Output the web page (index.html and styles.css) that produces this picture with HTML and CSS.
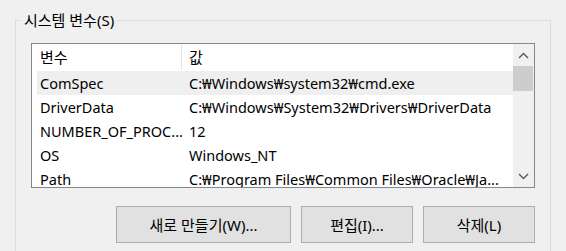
FILE: index.html
```html
<!DOCTYPE html>
<html lang="ko">
<head>
    <meta charset="UTF-8">
    <title>시스템 변수</title>
    <link rel="stylesheet" href="styles.css">
</head>
<body>
    <fieldset class="group">
        <legend class="group-title">시스템 변수(S)</legend>

        <div class="list-box">
            <div class="list-view">
                <div class="list-header">
                    <div class="col col-name">변수</div>
                    <div class="col col-value">값</div>
                </div>
                <div class="list-row selected">
                    <div class="col col-name">ComSpec</div>
                    <div class="col col-value">C:₩Windows₩system32₩cmd.exe</div>
                </div>
                <div class="list-row">
                    <div class="col col-name">DriverData</div>
                    <div class="col col-value">C:₩Windows₩System32₩Drivers₩DriverData</div>
                </div>
                <div class="list-row">
                    <div class="col col-name">NUMBER_OF_PROC...</div>
                    <div class="col col-value">12</div>
                </div>
                <div class="list-row">
                    <div class="col col-name">OS</div>
                    <div class="col col-value">Windows_NT</div>
                </div>
                <div class="list-row">
                    <div class="col col-name">Path</div>
                    <div class="col col-value">C:₩Program Files₩Common Files₩Oracle₩Ja...</div>
                </div>
            </div>

            <div class="scrollbar">
                <svg class="arrow" width="21" height="22" viewBox="0 0 21 22">
                    <path d="M6 14 L10.5 9.5 L15 14" fill="none" stroke="#606060" stroke-width="1.5"/>
                </svg>
                <div class="thumb-track">
                    <div class="thumb"></div>
                </div>
                <svg class="arrow" width="21" height="22" viewBox="0 0 21 22">
                    <path d="M6 9 L10.5 13.5 L15 9" fill="none" stroke="#606060" stroke-width="1.5"/>
                </svg>
            </div>
        </div>

        <div class="button-row">
            <button class="button button-wide">새로 만들기(W)...</button>
            <button class="button">편집(I)...</button>
            <button class="button">삭제(L)</button>
        </div>
    </fieldset>
</body>
</html>
```

FILE: styles.css
```css
/* Windows-style system variables panel */
:root {
    --bg: #f0f0f0;
    --group-line: #dcdcdc;
    --list-border: #828790;
    --btn-bg: #e1e1e1;
    --btn-border: #adadad;
}

* { margin: 0; padding: 0; box-sizing: border-box; }

body {
    font-family: "Noto Sans", "Noto Sans CJK KR", sans-serif;
    font-size: 15px;
    color: #000;
    background: var(--bg);
    width: 566px;
    height: 251px;
    overflow: hidden;
}

.group {
    margin: 10px 0 0 15px;
    width: 536px;
    height: 242px;
    border: 1px solid var(--group-line);
    padding: 0 15px;
}

.group-title {
    margin-left: -10px;
    padding: 0 3px;
    line-height: 20px;
    height: 20px;
}

.list-box {
    margin-top: 13px;
    width: 504px;
    height: 145px;
    border: 1px solid var(--list-border);
    background: #fff;
    display: flex;
    overflow: hidden;
}

.list-view {
    width: 481px;
    display: flex;
    flex-direction: column;
}

.list-header {
    display: flex;
    height: 27px;
    flex-shrink: 0;
}

.list-header .col {
    line-height: 26px;
}

.list-header .col-name {
    width: 150px;
    height: 26px;
    padding-left: 8px;
    border-right: 1px solid #e5e5e5;
}

.list-header .col-value {
    padding-left: 7px;
}

.list-row {
    display: flex;
    height: 24px;
    flex-shrink: 0;
    margin-left: 5px;
    font-size: 14.5px;
    line-height: 24px;
}

.list-row.selected {
    background: #efefef;
}

.col {
    white-space: nowrap;
    overflow: hidden;
}

.list-row .col-name {
    width: 152px;
    padding-left: 3px;
}

.list-row .col-value {
    flex: 1;
}

.scrollbar {
    width: 21px;
    background: var(--bg);
    display: flex;
    flex-direction: column;
}

.arrow {
    display: block;
    flex-shrink: 0;
}

.thumb-track {
    flex: 1;
}

.thumb {
    height: 25px;
    width: 20px;
    background: #cdcdcd;
}

.button-row {
    display: flex;
    justify-content: flex-end;
    gap: 10px;
    margin-top: 18px;
    width: 504px;
}

.button {
    font-family: inherit;
    font-size: 15px;
    color: #000;
    height: 37px;
    width: 112px;
    background: var(--btn-bg);
    border: 1px solid var(--btn-border);
}

.button-wide {
    width: 175px;
}
```
